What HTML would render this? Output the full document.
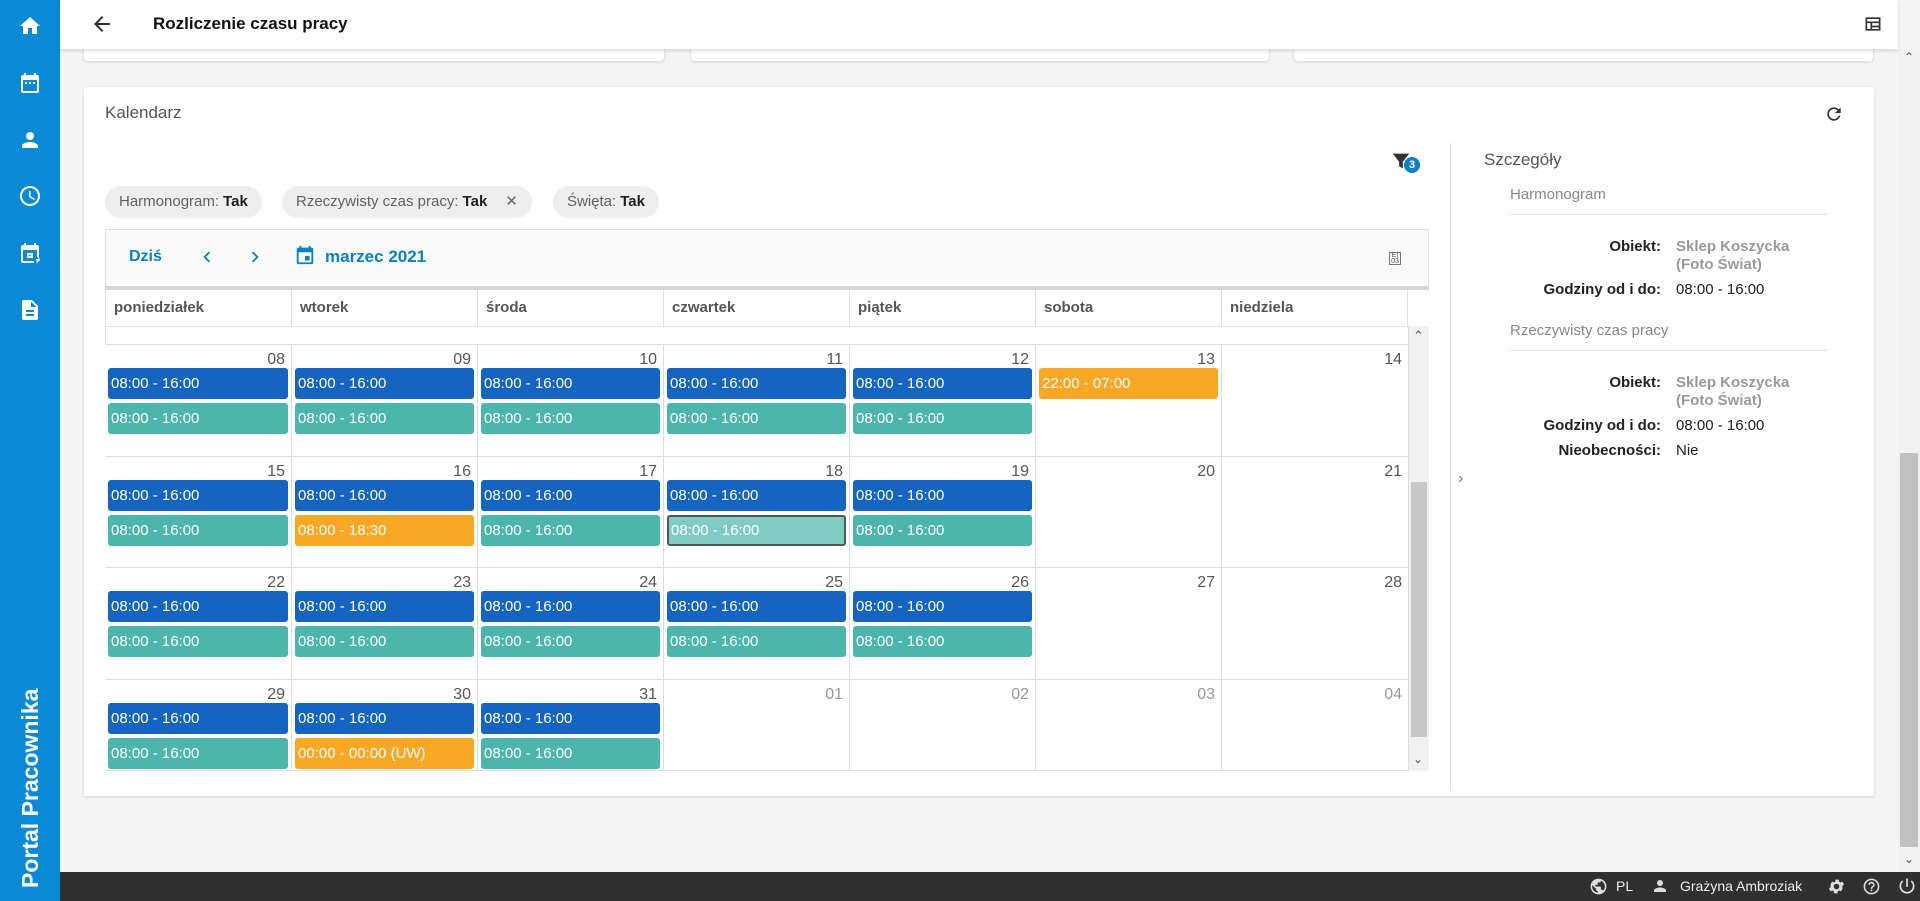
<!DOCTYPE html>
<html><head><meta charset="utf-8">
<style>
*{box-sizing:border-box;margin:0;padding:0}
body{width:1920px;height:901px;overflow:hidden;background:#f5f5f5;font-family:"Liberation Sans",sans-serif;position:relative;color:#212121}
.abs{position:absolute}
#side{left:0;top:0;width:60px;height:901px;background:#0a8ad4}
#side svg{position:absolute;left:18px;width:24px;height:24px;fill:#fff}
#hdr{left:60px;top:0;width:1838px;height:49px;background:#fff;box-shadow:0 2px 4px rgba(0,0,0,.12);z-index:3}
.tcard{top:40px;height:21px;background:#fff;border-radius:0 0 4px 4px;box-shadow:0 1px 3px rgba(0,0,0,.15)}
#main{left:84px;top:87px;width:1790px;height:709px;background:#fff;box-shadow:0 1px 3px rgba(0,0,0,.15);border-radius:2px}
.chip{top:186px;height:32px;background:#eeeeee;border-radius:16px;font-size:15px;line-height:32px;padding:0 14px;color:#616161}
.chip b{color:#212121;font-weight:bold;margin-left:4px}
#tb{left:105px;top:229px;width:1324px;height:61px;background:#fafafa;border:1px solid #e0e0e0;border-bottom:none}
.col{top:290px;height:36px;border-right:1px solid #ddd;font-size:15px;font-weight:bold;color:#555;line-height:36px;padding-left:8px;background:#fff}
.cell{border-right:1px solid #ddd;border-bottom:1px solid #ddd;background:#fff}
.dn{position:absolute;right:6px;top:6px;font-size:16px;color:#555}
.dn.g{color:#999}
.ev{position:absolute;left:3px;right:3px;height:31px;border-radius:3px;color:#fff;font-size:15px;line-height:31px;padding-left:3px}
.b{background:#1565c0;top:23px}.t{background:#4db6ac;top:58px}.o{background:#f9a825}
.lbl{position:absolute;font-size:15px;text-align:right;width:200px;font-weight:bold;color:#222}
.val{position:absolute;font-size:15px;left:1676px}
.gv{color:#999;line-height:18px;font-weight:bold}
#foot{left:60px;top:872px;width:1860px;height:29px;background:#303030;color:#fff;font-size:14px}
</style></head><body>
<div id="side" class="abs">
<svg style="top:14px" viewBox="0 0 24 24"><path d="M10 20v-6h4v6h5v-8h3L12 3 2 12h3v8z"/></svg>
<svg style="top:71px" viewBox="0 0 24 24"><path d="M19 4h-1V2h-2v2H8V2H6v2H5a2 2 0 0 0-2 2v14a2 2 0 0 0 2 2h14a2 2 0 0 0 2-2V6a2 2 0 0 0-2-2zm0 16H5V9h14zM7 11h2v2H7zm4 0h2v2h-2zm4 0h2v2h-2z"/></svg>
<svg style="top:128px" viewBox="0 0 24 24"><path d="M12 12a4 4 0 1 0 0-8 4 4 0 0 0 0 8zm0 2c-2.7 0-8 1.3-8 4v2h16v-2c0-2.7-5.3-4-8-4z"/></svg>
<svg style="top:184px" viewBox="0 0 24 24"><path d="M12 2a10 10 0 1 0 0 20 10 10 0 0 0 0-20zm0 18a8 8 0 1 1 0-16 8 8 0 0 1 0 16zm.5-13H11v6l5 3 .8-1.2-4.3-2.6z"/></svg>
<svg style="top:241px" viewBox="0 0 24 24"><path d="M19 4h-1V2h-2v2H8V2H6v2H5a2 2 0 0 0-2 2v14a2 2 0 0 0 2 2h11v-2H5V9h14v7h2V6a2 2 0 0 0-2-2zM9 12h6v5H9zm2 2v1h2v-1zm7 4h3l-1.5-1.5 1-1L22 19l-3 3-1-1 1.5-1.5H18z"/></svg>
<svg style="top:298px" viewBox="0 0 24 24"><path d="M14 2H6a2 2 0 0 0-2 2v16a2 2 0 0 0 2 2h12a2 2 0 0 0 2-2V8zm2 16H8v-2h8zm0-4H8v-2h8zm-3-5V3.5L18.5 9z"/></svg>
<div class="abs" style="left:17px;top:888px;transform:rotate(-90deg);transform-origin:0 0;color:#fff;font-size:23px;font-weight:bold;white-space:nowrap;width:230px;line-height:26px">Portal Pracownika</div>
</div>
<div id="hdr" class="abs">
<svg class="abs" style="left:30px;top:12px" width="24" height="24" viewBox="0 0 24 24"><path d="M20 11H7.8l5.6-5.6L12 4l-8 8 8 8 1.4-1.4L7.8 13H20z" fill="#333"/></svg>
<div class="abs" style="left:93px;top:14px;font-size:17px;font-weight:bold;color:#111">Rozliczenie czasu pracy</div>
<svg class="abs" style="left:1803px;top:14px" width="20" height="20" viewBox="0 0 24 24"><path d="M3 4h18v16H3zm2 2v3h14V6zm0 5v7h4v-7zm6 0v3h8v-3zm0 5v2h8v-2z" fill="#333"/></svg>
</div>
<div class="abs tcard" style="left:84px;width:580px"></div>
<div class="abs tcard" style="left:691px;width:578px"></div>
<div class="abs tcard" style="left:1294px;width:579px"></div>
<div id="main" class="abs"></div>
<div class="abs" style="left:105px;top:103px;font-size:17px;color:#555">Kalendarz</div>
<svg class="abs" style="left:1824px;top:104px" width="20" height="20" viewBox="0 0 24 24"><path d="M17.6 6.4A8 8 0 1 0 19.7 14h-2.1A6 6 0 1 1 12 6c1.7 0 3.1.7 4.2 1.8L13 11h7V4z" fill="#333"/></svg>
<svg class="abs" style="left:1390px;top:150px" width="22" height="22" viewBox="0 0 24 24"><path d="M3 4h18l-7 9v7l-4-2v-5z" fill="#333"/></svg>
<div class="abs" style="left:1404px;top:157px;width:16px;height:16px;border-radius:50%;background:#0a7fc4;color:#fff;font-size:11px;text-align:center;line-height:16px;font-weight:bold">3</div>
<div class="abs chip" style="left:105px">Harmonogram:<b>Tak</b></div>
<div class="abs chip" style="left:282px">Rzeczywisty czas pracy:<b>Tak</b><span style="margin-left:18px;color:#666">✕</span></div>
<div class="abs chip" style="left:553px">Święta:<b>Tak</b></div>
<div id="tb" class="abs"></div>
<div class="abs" style="left:129px;top:248px;color:#0a7fc4;font-weight:bold;font-size:16px">Dziś</div>
<svg class="abs" style="left:196px;top:246px" width="22" height="22" viewBox="0 0 24 24"><path d="M15.4 7.4 14 6l-6 6 6 6 1.4-1.4L10.8 12z" fill="#0a7fc4"/></svg>
<svg class="abs" style="left:244px;top:246px" width="22" height="22" viewBox="0 0 24 24"><path d="M8.6 16.6 10 18l6-6-6-6-1.4 1.4 4.6 4.6z" fill="#0a7fc4"/></svg>
<svg class="abs" style="left:294px;top:244px" width="22" height="22" viewBox="0 0 24 24"><path d="M19 4h-1V2h-2v2H8V2H6v2H5a2 2 0 0 0-2 2v14a2 2 0 0 0 2 2h14a2 2 0 0 0 2-2V6a2 2 0 0 0-2-2zm0 16H5V9h14zm-7-7h5v5h-5z" fill="#0a7fc4"/></svg>
<div class="abs" style="left:325px;top:247px;color:#0a7fc4;font-weight:bold;font-size:17px">marzec 2021</div>
<div class="abs" style="left:1389px;top:252px;width:12px;height:13px;border:1px solid #777;font-size:7px;line-height:6px;color:#555;text-align:center">E|<br>03</div>
<div class="abs" style="left:105px;top:286px;width:1324px;height:4px;background:#d6d6d6"></div>
<div class="abs" style="left:105px;top:290px;width:1324px;height:481px;border-left:1px solid #ddd;border-bottom:1px solid #ddd"></div>
<div class="abs col" style="left:105px;width:187px;border-left:1px solid #ddd">poniedziałek</div>
<div class="abs col" style="left:292px;width:186px">wtorek</div>
<div class="abs col" style="left:478px;width:186px">środa</div>
<div class="abs col" style="left:664px;width:186px">czwartek</div>
<div class="abs col" style="left:850px;width:186px">piątek</div>
<div class="abs col" style="left:1036px;width:186px">sobota</div>
<div class="abs col" style="left:1222px;width:186px">niedziela</div>
<div class="abs" style="left:105px;top:326px;width:1304px;height:19px;border-bottom:1px solid #ddd;border-top:1px solid #ddd;border-right:1px solid #ddd"></div>
<div class="abs" style="left:1409px;top:326px;width:20px;height:445px;background:#f1f1f1"></div>
<div class="abs" style="left:1411px;top:482px;width:16px;height:255px;background:#c8c8c8"></div>
<div class="abs" style="left:1413px;top:328px;font-size:13px;color:#555">⌃</div>
<div class="abs" style="left:1413px;top:752px;font-size:12px;color:#555">⌄</div>

<!-- week 1 -->
<div class="abs cell" style="left:105px;top:345px;width:187px;height:112px"><span class="dn">08</span><div class="ev b">08:00 - 16:00</div><div class="ev t">08:00 - 16:00</div></div>
<div class="abs cell" style="left:292px;top:345px;width:186px;height:112px"><span class="dn">09</span><div class="ev b">08:00 - 16:00</div><div class="ev t">08:00 - 16:00</div></div>
<div class="abs cell" style="left:478px;top:345px;width:186px;height:112px"><span class="dn">10</span><div class="ev b">08:00 - 16:00</div><div class="ev t">08:00 - 16:00</div></div>
<div class="abs cell" style="left:664px;top:345px;width:186px;height:112px"><span class="dn">11</span><div class="ev b">08:00 - 16:00</div><div class="ev t">08:00 - 16:00</div></div>
<div class="abs cell" style="left:850px;top:345px;width:186px;height:112px"><span class="dn">12</span><div class="ev b">08:00 - 16:00</div><div class="ev t">08:00 - 16:00</div></div>
<div class="abs cell" style="left:1036px;top:345px;width:186px;height:112px"><span class="dn">13</span><div class="ev o" style="top:23px">22:00 - 07:00</div></div>
<div class="abs cell" style="left:1222px;top:345px;width:187px;height:112px"><span class="dn">14</span></div>
<!-- week 2 -->
<div class="abs cell" style="left:105px;top:457px;width:187px;height:111px"><span class="dn">15</span><div class="ev b">08:00 - 16:00</div><div class="ev t">08:00 - 16:00</div></div>
<div class="abs cell" style="left:292px;top:457px;width:186px;height:111px"><span class="dn">16</span><div class="ev b">08:00 - 16:00</div><div class="ev o" style="top:58px">08:00 - 18:30</div></div>
<div class="abs cell" style="left:478px;top:457px;width:186px;height:111px"><span class="dn">17</span><div class="ev b">08:00 - 16:00</div><div class="ev t">08:00 - 16:00</div></div>
<div class="abs cell" style="left:664px;top:457px;width:186px;height:111px"><span class="dn">18</span><div class="ev b">08:00 - 16:00</div><div class="ev t" style="background:#80cbc4;border:2px solid #555;line-height:27px;padding-left:2px">08:00 - 16:00</div></div>
<div class="abs cell" style="left:850px;top:457px;width:186px;height:111px"><span class="dn">19</span><div class="ev b">08:00 - 16:00</div><div class="ev t">08:00 - 16:00</div></div>
<div class="abs cell" style="left:1036px;top:457px;width:186px;height:111px"><span class="dn">20</span></div>
<div class="abs cell" style="left:1222px;top:457px;width:187px;height:111px"><span class="dn">21</span></div>
<!-- week 3 -->
<div class="abs cell" style="left:105px;top:568px;width:187px;height:112px"><span class="dn">22</span><div class="ev b">08:00 - 16:00</div><div class="ev t">08:00 - 16:00</div></div>
<div class="abs cell" style="left:292px;top:568px;width:186px;height:112px"><span class="dn">23</span><div class="ev b">08:00 - 16:00</div><div class="ev t">08:00 - 16:00</div></div>
<div class="abs cell" style="left:478px;top:568px;width:186px;height:112px"><span class="dn">24</span><div class="ev b">08:00 - 16:00</div><div class="ev t">08:00 - 16:00</div></div>
<div class="abs cell" style="left:664px;top:568px;width:186px;height:112px"><span class="dn">25</span><div class="ev b">08:00 - 16:00</div><div class="ev t">08:00 - 16:00</div></div>
<div class="abs cell" style="left:850px;top:568px;width:186px;height:112px"><span class="dn">26</span><div class="ev b">08:00 - 16:00</div><div class="ev t">08:00 - 16:00</div></div>
<div class="abs cell" style="left:1036px;top:568px;width:186px;height:112px"><span class="dn">27</span></div>
<div class="abs cell" style="left:1222px;top:568px;width:187px;height:112px"><span class="dn">28</span></div>
<!-- week 4 -->
<div class="abs cell" style="left:105px;top:680px;width:187px;height:91px"><span class="dn">29</span><div class="ev b">08:00 - 16:00</div><div class="ev t">08:00 - 16:00</div></div>
<div class="abs cell" style="left:292px;top:680px;width:186px;height:91px"><span class="dn">30</span><div class="ev b">08:00 - 16:00</div><div class="ev o" style="top:58px">00:00 - 00:00 (UW)</div></div>
<div class="abs cell" style="left:478px;top:680px;width:186px;height:91px"><span class="dn">31</span><div class="ev b">08:00 - 16:00</div><div class="ev t">08:00 - 16:00</div></div>
<div class="abs cell" style="left:664px;top:680px;width:186px;height:91px"><span class="dn g">01</span></div>
<div class="abs cell" style="left:850px;top:680px;width:186px;height:91px"><span class="dn g">02</span></div>
<div class="abs cell" style="left:1036px;top:680px;width:186px;height:91px"><span class="dn g">03</span></div>
<div class="abs cell" style="left:1222px;top:680px;width:187px;height:91px"><span class="dn g">04</span></div>

<!-- details -->
<div class="abs" style="left:1450px;top:143px;width:1px;height:647px;background:#e0e0e0"></div>
<div class="abs" style="left:1458px;top:470px;font-size:16px;color:#777">›</div>
<div class="abs" style="left:1484px;top:150px;font-size:17px;color:#555">Szczegóły</div>
<div class="abs" style="left:1510px;top:186px;font-size:15px;color:#888">Harmonogram</div>
<div class="abs" style="left:1510px;top:214px;width:318px;height:1px;background:#e0e0e0"></div>
<div class="lbl" style="left:1461px;top:238px">Obiekt:</div>
<div class="val gv" style="top:238px">Sklep Koszycka<br>(Foto Świat)</div>
<div class="lbl" style="left:1461px;top:281px">Godziny od i do:</div>
<div class="val" style="top:281px">08:00 - 16:00</div>
<div class="abs" style="left:1510px;top:322px;font-size:15px;color:#888">Rzeczywisty czas pracy</div>
<div class="abs" style="left:1510px;top:350px;width:318px;height:1px;background:#e0e0e0"></div>
<div class="lbl" style="left:1461px;top:374px">Obiekt:</div>
<div class="val gv" style="top:374px">Sklep Koszycka<br>(Foto Świat)</div>
<div class="lbl" style="left:1461px;top:417px">Godziny od i do:</div>
<div class="val" style="top:417px">08:00 - 16:00</div>
<div class="lbl" style="left:1461px;top:442px">Nieobecności:</div>
<div class="val" style="top:442px">Nie</div>

<!-- page scrollbar -->
<div class="abs" style="left:1898px;top:49px;width:22px;height:823px;background:#f1f1f1"></div>
<div class="abs" style="left:1900px;top:453px;width:18px;height:394px;background:#c1c1c1"></div>
<div class="abs" style="left:1904px;top:50px;font-size:12px;color:#555">⌃</div>
<div class="abs" style="left:1904px;top:852px;font-size:12px;color:#555">⌄</div>

<div id="foot" class="abs">
<svg class="abs" style="left:1529px;top:5px" width="19" height="19" viewBox="0 0 24 24"><path d="M12 2a10 10 0 1 0 0 20 10 10 0 0 0 0-20zm-1 17.9A8 8 0 0 1 4.2 10.2L9 15v1c0 1.1.9 2 2 2zm6.9-2.5A2 2 0 0 0 16 16h-1v-3c0-.6-.4-1-1-1H8v-2h2c.6 0 1-.4 1-1V7h2a2 2 0 0 0 2-2v-.4a8 8 0 0 1 2.9 12.8z" fill="#ddd"/></svg>
<div class="abs" style="left:1556px;top:6px;color:#eee">PL</div>
<svg class="abs" style="left:1591px;top:5px" width="18" height="18" viewBox="0 0 24 24"><path d="M12 12a4 4 0 1 0 0-8 4 4 0 0 0 0 8zm0 2c-2.7 0-8 1.3-8 4v2h16v-2c0-2.7-5.300-4-8-4z" fill="#ddd"/></svg>
<div class="abs" style="left:1620px;top:6px;color:#eee;font-size:14px">Grażyna Ambroziak</div>
<svg class="abs" style="left:1767px;top:5px" width="19" height="19" viewBox="0 0 24 24"><path d="M19.4 13a7.5 7.5 0 0 0 0-2l2.1-1.6-2-3.5-2.5 1a7 7 0 0 0-1.7-1l-.4-2.6h-4l-.4 2.6a7 7 0 0 0-1.7 1l-2.5-1-2 3.5L4.6 11a7.5 7.5 0 0 0 0 2l-2.1 1.6 2 3.5 2.5-1a7 7 0 0 0 1.7 1l.4 2.6h4l.4-2.6a7 7 0 0 0 1.7-1l2.5 1 2-3.5zM12 15.5a3.5 3.5 0 1 1 0-7 3.5 3.5 0 0 1 0 7z" fill="#ddd"/></svg>
<svg class="abs" style="left:1802px;top:5px" width="19" height="19" viewBox="0 0 24 24"><path d="M12 2a10 10 0 1 0 0 20 10 10 0 0 0 0-20zm0 18a8 8 0 1 1 0-16 8 8 0 0 1 0 16zm-1-4h2v2h-2zm1-10a4 4 0 0 0-4 4h2a2 2 0 1 1 4 0c0 2-3 1.8-3 5h2c0-2.3 3-2.5 3-5a4 4 0 0 0-4-4z" fill="#ddd"/></svg>
<svg class="abs" style="left:1837px;top:4px" width="20" height="20" viewBox="0 0 24 24"><path d="M13 3h-2v10h2zm4.8 2.2-1.4 1.4A7 7 0 1 1 7.6 6.6L6.2 5.2A9 9 0 1 0 17.8 5.2z" fill="#ddd"/></svg>
</div>
</body></html>
